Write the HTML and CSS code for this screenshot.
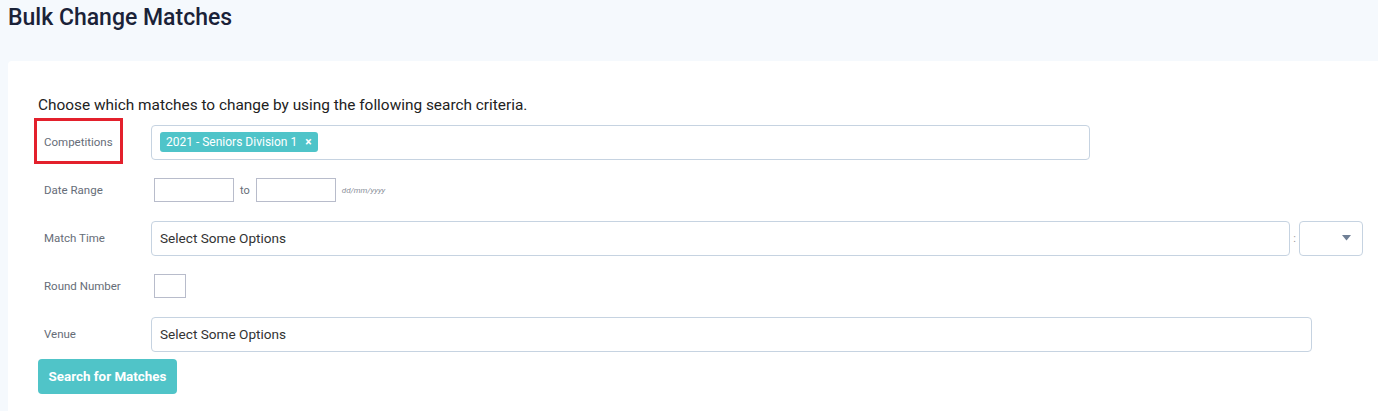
FILE: index.html
```html
<!DOCTYPE html>
<html>
<head>
<meta charset="utf-8">
<link rel="stylesheet" href="styles.css">
</head>
<body>
<h1 class="title">Bulk Change Matches</h1>
<div class="card">
  <p class="intro">Choose which matches to change by using the following search criteria.</p>
  <div class="row">
    <div class="label highlight">Competitions</div>
    <div class="chosen w-comp">
      <span class="tag">2021 - Seniors Division 1 <span class="x">×</span></span>
    </div>
  </div>
  <div class="row">
    <div class="label">Date Range</div>
    <div class="field">
      <span class="box date"></span>
      <span class="to">to</span>
      <span class="box date"></span>
      <span class="hint">dd/mm/yyyy</span>
    </div>
  </div>
  <div class="row">
    <div class="label">Match Time</div>
    <div class="chosen w-time"><span class="ph">Select Some Options</span></div>
    <span class="colon">:</span>
    <div class="mini">
      <svg width="9" height="6" viewBox="0 0 9 6"><path d="M0 0h9L4.5 5.5z" fill="#6f7f95"/></svg>
    </div>
  </div>
  <div class="row">
    <div class="label">Round Number</div>
    <div class="field"><span class="box round"></span></div>
  </div>
  <div class="row">
    <div class="label">Venue</div>
    <div class="chosen w-venue"><span class="ph">Select Some Options</span></div>
  </div>
  <button class="btn">Search for Matches</button>
</div>
</body>
</html>
```
FILE: styles.css
```css
html, body { margin: 0; padding: 0; }
body {
  background: #f5f9fd;
  font-family: Roboto, "Liberation Sans", sans-serif;
  color: #222;
  width: 1378px;
  height: 411px;
  overflow: hidden;
}
.title {
  margin: 0;
  padding: 4px 8px 0 8px;
  height: 61px;
  box-sizing: border-box;
  font-size: 23px;
  font-weight: 500;
  color: #1a2238;
}
.card {
  margin-left: 8px;
  background: #fff;
  border-top-left-radius: 4px;
  padding: 35px 0 20px 30px;
  height: 350px;
  box-sizing: border-box;
}
.intro {
  margin: 0 0 4px 0;
  font-size: 15.4px;
  line-height: 18px;
  color: #222;
}
.row {
  display: flex;
  align-items: center;
  height: 48px;
}
.label {
  width: 107px;
  padding-left: 6px;
  flex-shrink: 0;
  font-size: 11.5px;
  color: #666d78;
}
.highlight { position: relative; }
.highlight::after {
  content: "";
  position: absolute;
  left: -4px;
  top: -17px;
  width: 83px;
  height: 40px;
  border: 3px solid #e3202c;
}
.chosen {
  height: 35px;
  box-sizing: border-box;
  border: 1px solid #c6d3e1;
  border-radius: 4px;
  display: flex;
  align-items: center;
  padding-left: 8px;
  background: #fff;
}
.w-comp { width: 939px; }
.w-time { width: 1139px; }
.w-venue { width: 1161px; }
.ph { font-size: 13.6px; color: #333; }
.tag {
  background: #4fc4c9;
  color: #fff;
  font-size: 12px;
  border-radius: 3px;
  height: 20px;
  line-height: 20px;
  padding: 0 6px;
  white-space: nowrap;
}
.tag .x { font-weight: 700; margin-left: 5px; font-size: 12px; }
.field { display: flex; align-items: center; padding-left: 3px; }
.box {
  display: inline-block;
  border: 1px solid #b8bccb;
  box-sizing: border-box;
  background: #fff;
}
.date { width: 80px; height: 24px; }
.round { width: 32px; height: 24px; }
.to { font-size: 11px; color: #666d78; margin: 0 6px; }
.hint { font-size: 8px; font-style: italic; color: #8a8f99; margin-left: 6px; }
.colon { font-size: 11px; color: #999; width: 9px; text-align: center; }
.mini {
  width: 64px;
  height: 35px;
  box-sizing: border-box;
  border: 1px solid #c6d3e1;
  border-radius: 4px;
  display: flex;
  align-items: center;
  justify-content: flex-end;
  padding-right: 11px;
}
.btn {
  margin-top: 1px;
  width: 139px;
  height: 35px;
  border: none;
  border-radius: 4px;
  background: #50c4c8;
  color: #fff;
  font-family: Roboto, "Liberation Sans", sans-serif;
  font-weight: 700;
  font-size: 13.4px;
  padding: 0;
  cursor: pointer;
}
```
